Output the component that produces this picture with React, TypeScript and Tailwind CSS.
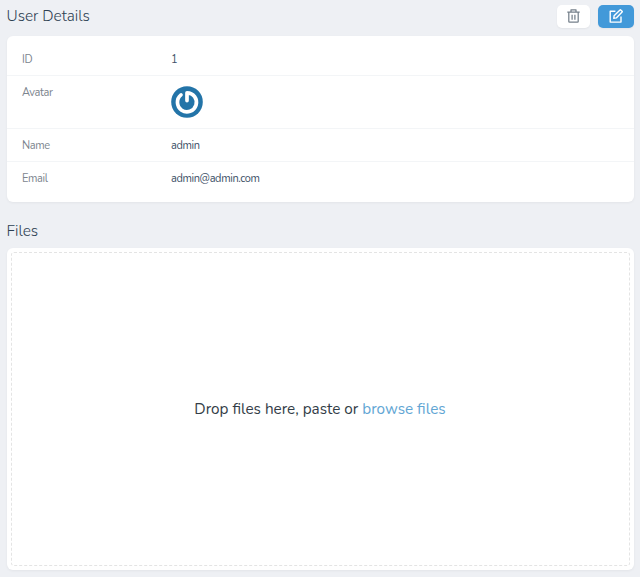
import React from "react";

const font = "font-['Nunito','Lato',sans-serif]";

function TrashIcon() {
  return (
    <svg width="13" height="14" viewBox="0 0 13 14" fill="none" stroke="#75808b" strokeWidth="1.25" strokeLinejoin="round">
      <path d="M0.3 3.2h12.4M4 3V0.8h5V3M1.8 3.4v9.1c0 .4.3.7.7.7h8c.4 0 .7-.3.7-.7V3.4M5.1 5.8v5M7.9 5.8v5" />
    </svg>
  );
}

function EditIcon() {
  return (
    <svg width="14" height="14" viewBox="0 0 14 14" fill="none" stroke="#fff" strokeWidth="1.4" strokeLinejoin="round" className="ml-px">
      <path d="M6.4 2.2H1.2v10.9H12V7.6" />
      <path d="M4.8 9.4l.3-2.6L11 .9c.2-.2.5-.2.7 0l1.4 1.4c.2.2.2.5 0 .7L7.3 8.9z" />
    </svg>
  );
}

function Avatar() {
  return (
    <svg width="32" height="32" viewBox="0 0 32 32" fill="none" className="block">
      <circle cx="16" cy="16" r="15.8" fill="#2374a8" />
      <path d="M10 8.9A9.5 9.5 0 1 0 16 6.8V14.6" stroke="#fff" strokeWidth="3.7" strokeLinecap="round" strokeLinejoin="round" />
    </svg>
  );
}

function Row({ label, height, last = false, children }: { label: string; height: string; last?: boolean; children: React.ReactNode }) {
  return (
    <div className={`flex px-[15.5px] ${height} ${last ? "" : "border-b border-[#f3f5f7]"}`}>
      <div className="w-[149px] pt-[10px] text-[#7c858e]">{label}</div>
      <div className="pt-[10px] text-[#3c5066]">{children}</div>
    </div>
  );
}

export default function App() {
  return (
    <main className={`flex h-[577px] w-[640px] flex-col bg-[#eef0f4] px-[6.5px] ${font}`}>
      <header className="flex h-[35.5px] justify-between">
        <h1 className="pt-[6px] text-[15.4px] leading-[20px] font-light text-[#2d4052]">User Details</h1>
        <div className="flex gap-2 pt-[4.5px]">
          <button aria-label="Delete" className="flex h-[23px] w-[33.5px] items-center justify-center rounded-[5px] bg-white shadow-[0_1px_2px_rgba(0,0,0,0.05)]">
            <TrashIcon />
          </button>
          <button aria-label="Edit" className="flex h-[23px] w-[35.5px] items-center justify-center rounded-[5px] bg-[#4299d9] shadow-[0_1px_2px_rgba(0,0,0,0.05)]">
            <EditIcon />
          </button>
        </div>
      </header>
      <section className="h-[166.5px] rounded-[6px] bg-white pt-[7px] text-[11px] leading-[14px] tracking-[-0.37px] shadow-[0_1px_3px_rgba(0,0,0,0.05)]">
        <Row label="ID" height="h-[33px]">1</Row>
        <Row label="Avatar" height="h-[53px]"><Avatar /></Row>
        <Row label="Name" height="h-[33px]">admin</Row>
        <Row label="Email" height="h-[33px]" last>admin@admin.com</Row>
      </section>
      <h2 className="h-[45.5px] pt-[19px] text-[15.4px] leading-[20px] font-light text-[#2d4052]">Files</h2>
      <section className="h-[322px] rounded-[6px] bg-white p-[4px] shadow-[0_1px_3px_rgba(0,0,0,0.05)]">
        <div className="flex h-full items-center justify-center rounded-[3px] border border-dashed border-[#e4e4e4] text-[15.3px] leading-[20px] text-[#333d47]">
          <p className="whitespace-nowrap">Drop files here, paste or <a className="text-[#62a6d4]">browse files</a></p>
        </div>
      </section>
    </main>
  );
}
